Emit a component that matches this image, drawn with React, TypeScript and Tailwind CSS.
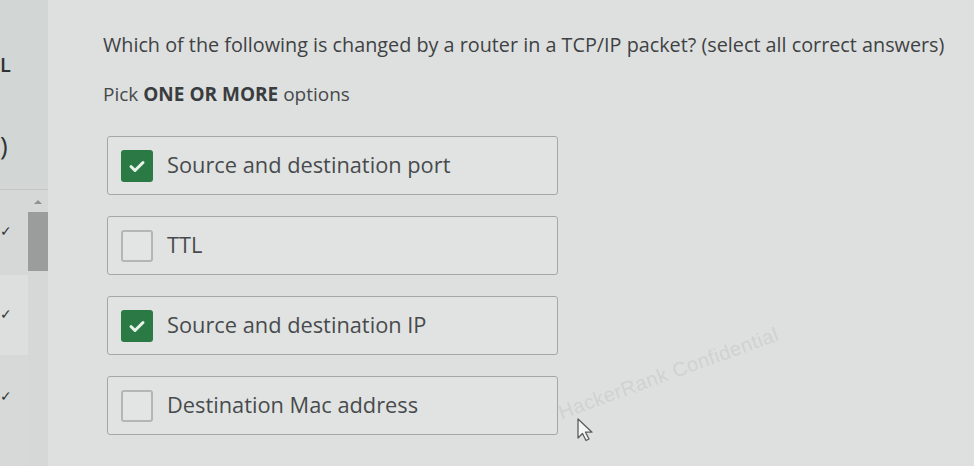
import React from "react";

interface Option {
    label: string;
    checked: boolean;
}

const options: Option[] = [
    { label: "Source and destination port", checked: true },
    { label: "TTL", checked: false },
    { label: "Source and destination IP", checked: true },
    { label: "Destination Mac address", checked: false },
];

const CheckBox: React.FC<{ checked: boolean }> = ({ checked }) =>
    checked ? (
        <div className="w-[32px] h-[32px] rounded-[3px] bg-[#2b7a45] flex items-center justify-center">
            <svg width="20" height="20" viewBox="0 0 20 20" fill="none">
                <path d="M4 10.5l4 4 8-8" stroke="#e8f3ea" strokeWidth="3" strokeLinecap="round" strokeLinejoin="round" />
            </svg>
        </div>
    ) : (
        <div className="w-[32px] h-[32px] rounded-[3px] border-2 border-[#b3b6b5] bg-[#e3e5e4]" />
    );

const Sidebar: React.FC = () => (
    <div className="w-[48px] shrink-0 flex flex-col text-[#2f3335]">
        <div className="h-[190px] bg-[#d2d6d5] border-b border-[#c3c7c6] relative">
            <span className="absolute left-0 top-[50px] text-[20px] font-semibold">L</span>
            <span className="absolute left-0 top-[130px] text-[26px] leading-[30px]">)</span>
        </div>
        <div className="flex flex-1">
            <div className="flex-1 flex flex-col">
                <div className="h-[85px] bg-[#d5d8d7] flex items-start pt-[30px] text-[14px]">✓</div>
                <div className="h-[80px] bg-[#dcdfde] flex items-start pt-[28px] text-[14px]">✓</div>
                <div className="flex-1 bg-[#d6d9d8] flex items-start pt-[30px] text-[14px]">✓</div>
            </div>
            <div className="w-[20px] bg-[#d5d8d7] flex flex-col items-center pt-[10px]">
                <div className="w-0 h-0 border-l-[4px] border-r-[4px] border-b-[4px] border-l-transparent border-r-transparent border-b-[#8f9291]" />
                <div className="w-[20px] h-[59px] mt-[8px] bg-[#9a9d9c]" />
            </div>
        </div>
    </div>
);

export default function App() {
    return (
        <div
            className="w-[974px] h-[466px] overflow-hidden flex bg-[#dee0df] relative"
            style={{ fontFamily: '"Open Sans", "Noto Sans", sans-serif' }}
        >
            <Sidebar />
            <main className="flex-1 pl-[55px] pt-[31px] text-[#45494b]">
                <h1 className="text-[19.8px] leading-[28px] text-[#3e4244] whitespace-nowrap">
                    Which of the following is changed by a router in a TCP/IP packet? (select all correct answers)
                </h1>
                <p className="mt-[22px] text-[19px] leading-[26px] text-[#46494b]">
                    Pick <span className="font-bold text-[#3a3d3f]">ONE OR MORE</span> options
                </p>
                <div className="mt-[29px] flex flex-col gap-[21px] pl-[4px]">
                    {options.map(o => (
                        <div
                            key={o.label}
                            className="w-[451px] h-[59px] rounded-[3px] border border-[#a4a7a6] bg-[#e1e3e2] flex items-center pl-[13px] gap-[14px]"
                        >
                            <CheckBox checked={o.checked} />
                            <span className="text-[21.8px] text-[#484b4d]">{o.label}</span>
                        </div>
                    ))}
                </div>
            </main>
            <div className="absolute left-[552px] top-[358px] -rotate-[20deg] text-[20px] text-[#d0d2d1] tracking-wide pointer-events-none" style={{ fontFamily: '"Liberation Sans", sans-serif' }}>
                HackerRank Confidential
            </div>
            <svg className="absolute left-[576px] top-[417px]" width="20" height="26" viewBox="0 0 20 26" fill="none">
                <path d="M2 2v19l4.5-4.5 3.5 7 3-1.5-3.5-6.8h6.5z" fill="#f4f5f5" stroke="#5a5d5e" strokeWidth="1.3" strokeLinejoin="round" />
            </svg>
        </div>
    );
}
